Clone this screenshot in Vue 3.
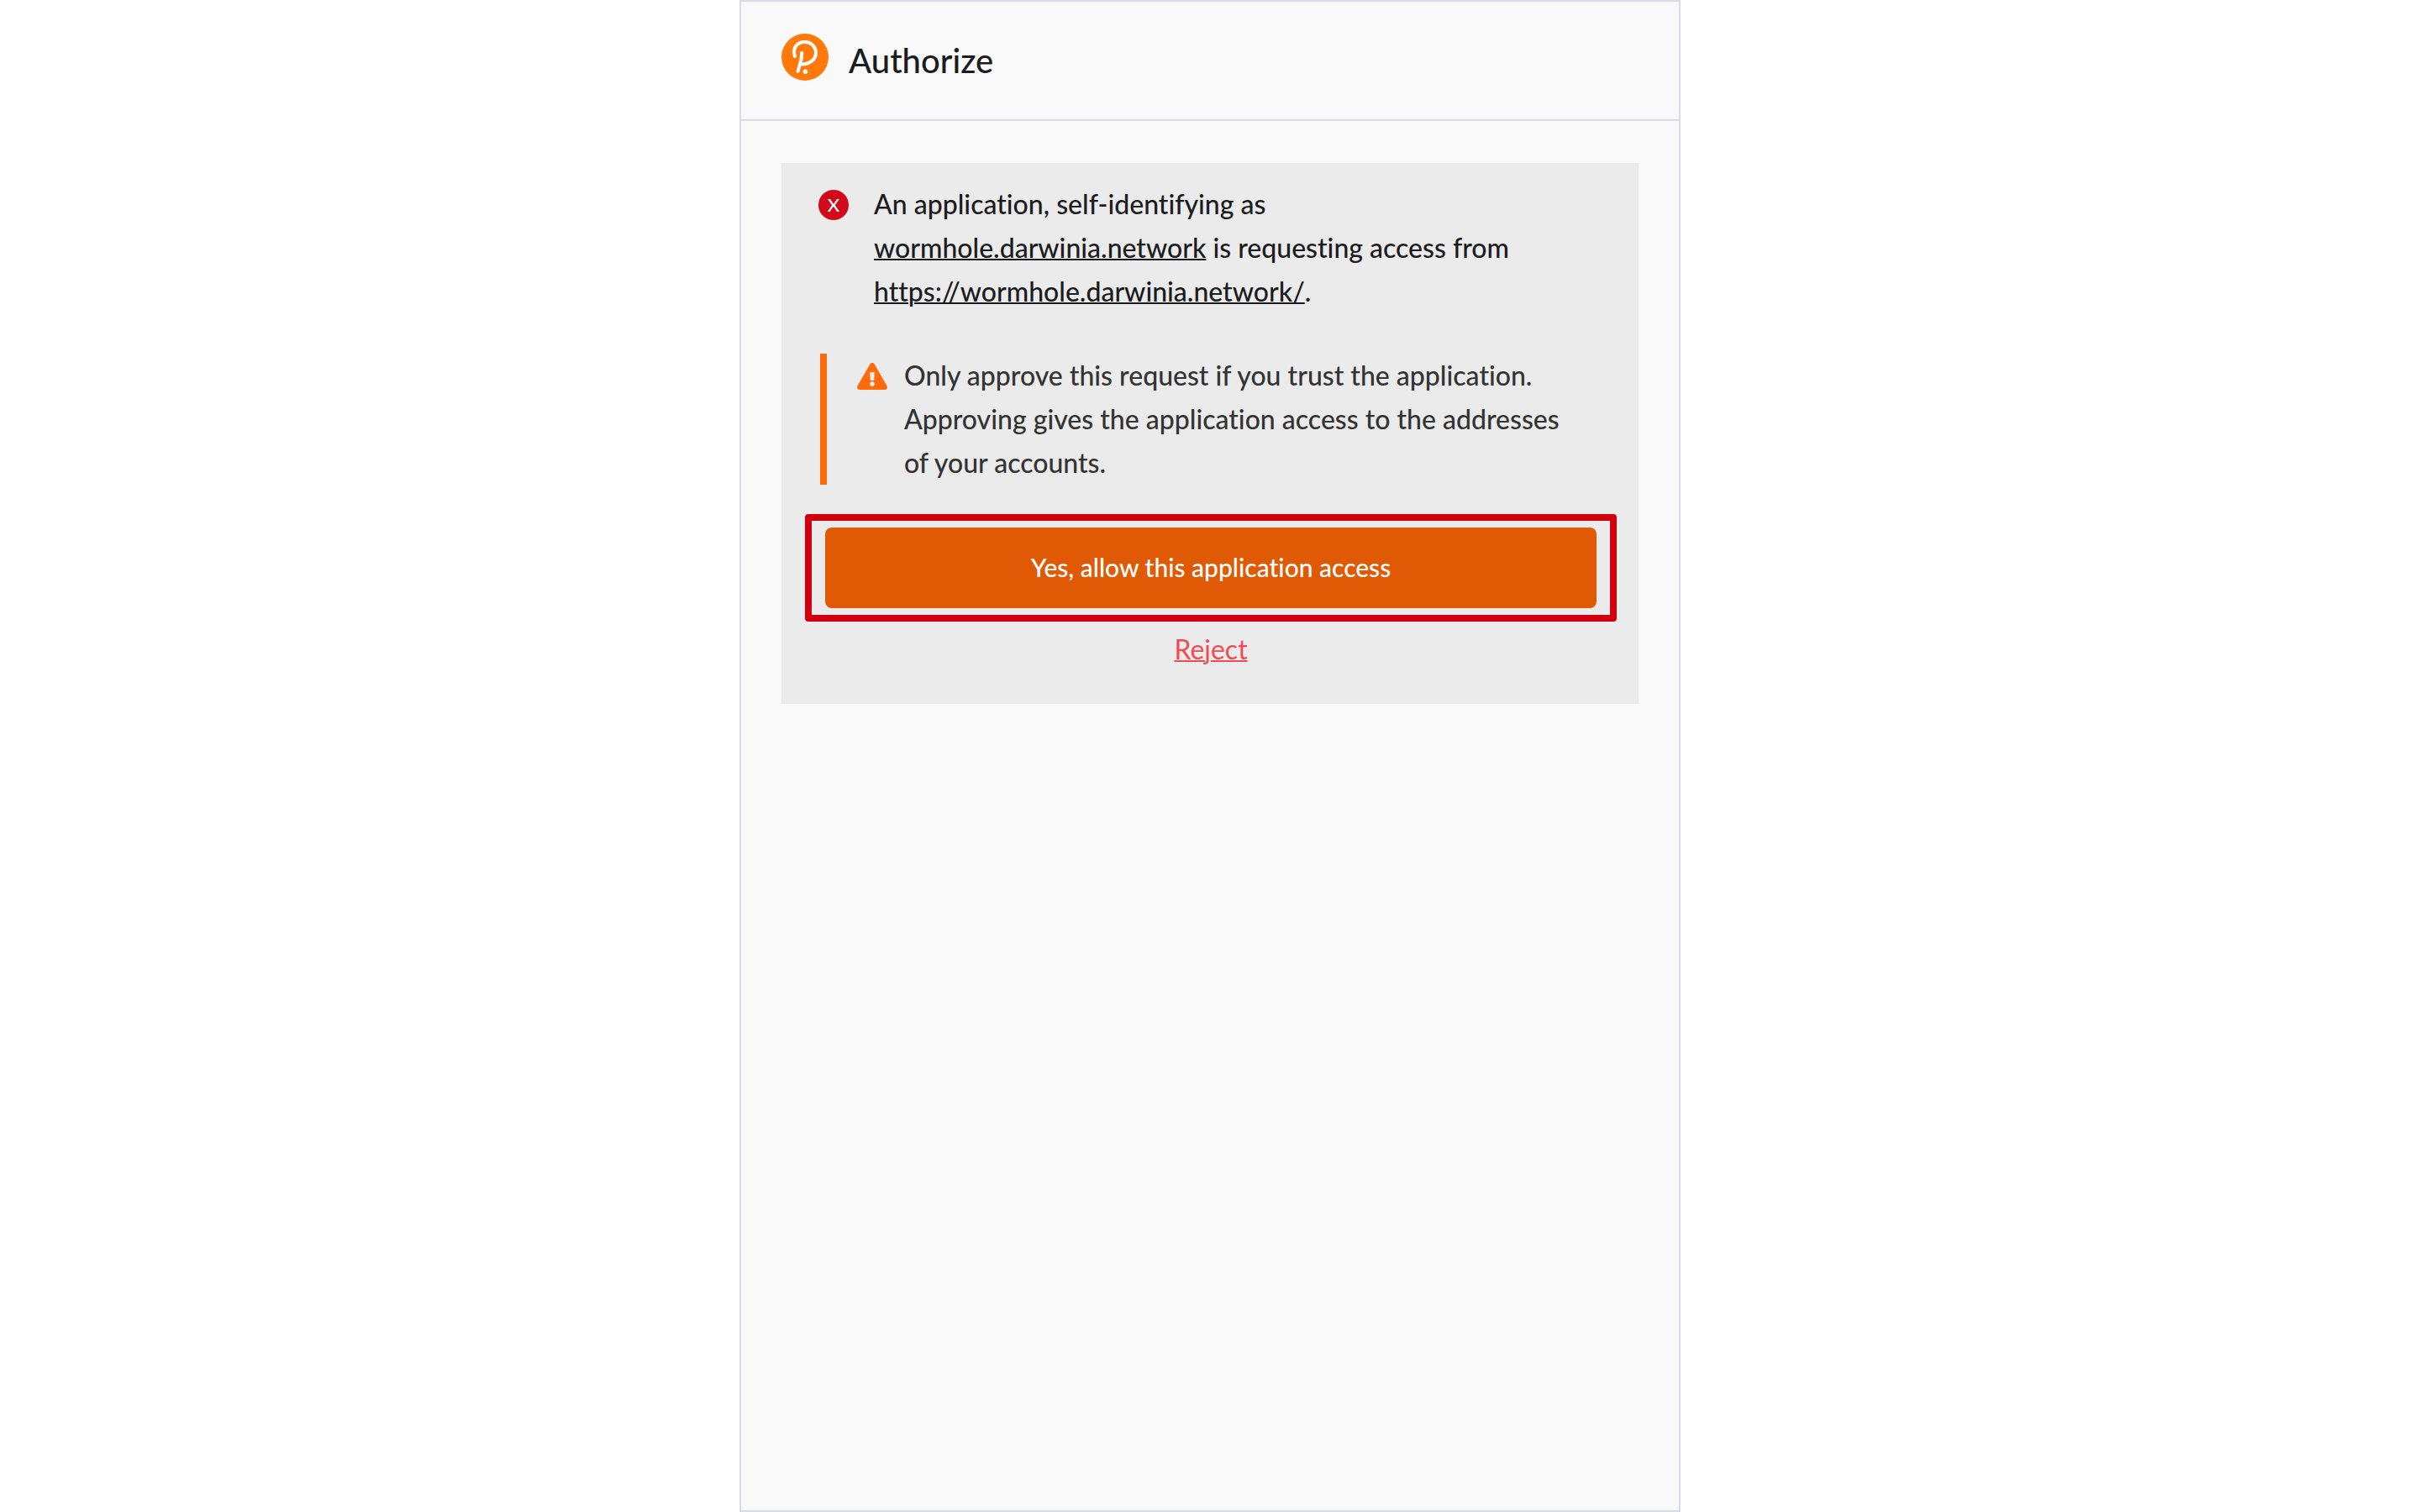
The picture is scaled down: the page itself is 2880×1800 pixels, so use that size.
<script setup>
const appName = 'wormhole.darwinia.network'
const appUrl = 'https://wormhole.darwinia.network/'
</script>

<template>
  <main class="popup">
    <header class="header">
      <svg class="logo" viewBox="0 0 56 56" aria-hidden="true">
        <circle cx="28" cy="28" r="28" fill="#ff7a0a" />
        <g fill="none" stroke="#fff" stroke-width="4" stroke-linecap="round" stroke-linejoin="round">
          <path d="M16 27C12.5 17 19 10 27.500 10C35.500 10 41 16 41 22.500C41 31 34 36.500 23.500 36.500" />
          <path d="M24.300 23L23.500 31L19.500 45" />
        </g>
        <circle cx="28.500" cy="45.300" r="2.700" fill="#fff" />
      </svg>
      <h1 class="title">Authorize</h1>
    </header>

    <section class="request">
      <div class="info">
        <span class="badge">X</span>
        <p class="text">
          An application, self-identifying as
          <a href="#">{{ appName }}</a> is requesting access from
          <a href="#">{{ appUrl }}</a>.
        </p>
      </div>

      <div class="warning">
        <svg class="warning-icon" viewBox="0 0 576 512" aria-hidden="true">
          <path
            fill="#ff6a0a"
            d="M569.517 440.013C587.975 472.007 564.806 512 527.940 512H48.054c-36.937 0-59.999-40.055-41.577-71.987L246.423 23.985c18.467-32.009 64.720-31.951 83.154 0l239.940 416.028zM288 354c-25.405 0-46 20.595-46 46s20.595 46 46 46 46-20.595 46-46-20.595-46-46-46zm-43.673-165.346l7.418 136c.347 6.364 5.609 11.346 11.982 11.346h48.546c6.373 0 11.635-4.982 11.982-11.346l7.418-136c.375-6.874-5.098-12.654-11.982-12.654h-63.383c-6.884 0-12.356 5.780-11.981 12.654z"
          />
        </svg>
        <p class="text">
          Only approve this request if you trust the application. Approving gives the
          application access to the addresses of your accounts.
        </p>
      </div>

      <div class="highlight">
        <button class="allow" type="button">Yes, allow this application access</button>
      </div>
      <a class="reject" href="#">Reject</a>
    </section>
  </main>
</template>

<style>
body {
  margin: 0;
  background: #fff;
}
</style>

<style scoped>
.popup {
  box-sizing: border-box;
  max-width: 1120px;
  min-height: 100vh;
  margin: 0 auto;
  border: 2px solid #d8dbe9;
  background: #f9f9f9;
  color: #1b1c20;
  font-family: Lato, "Open Sans", sans-serif;
  font-size: 32px;
  font-weight: 500;
  font-variant-ligatures: none;
  line-height: 52px;
}

.header {
  display: flex;
  align-items: flex-start;
  gap: 24px;
  padding: 38px 48px 44px;
  border-bottom: 2px solid #d8dbe9;
}

.logo {
  width: 56px;
  height: 56px;
}

.title {
  margin: 6px 0 0;
  font-size: 40px;
  font-weight: 500;
  line-height: 52px;
}

.request {
  display: flex;
  flex-direction: column;
  margin: 50px 48px;
  padding: 23px 26px 39px 28px;
  background: #ebebeb;
}

.info {
  display: flex;
  align-items: flex-start;
  gap: 30px;
  padding: 0 44px 0 16px;
}

.badge {
  flex: none;
  width: 36px;
  height: 36px;
  margin-top: 9px;
  border-radius: 50%;
  background: #d00a1a;
  color: #fff;
  font-size: 22px;
  line-height: 36px;
  text-align: center;
}

.text {
  margin: 0;
}

.text a {
  color: inherit;
  text-decoration-thickness: 2px;
}

.warning {
  display: flex;
  align-items: flex-start;
  gap: 20px;
  margin: 48px 44px 0 18px;
  padding-left: 36px;
  border-left: 8px solid #ff6a0a;
  color: #333;
}

.warning-icon {
  flex: none;
  width: 36px;
  height: 32px;
  margin-top: 11px;
}

.highlight {
  display: flex;
  margin-top: 35px;
  padding: 8px 16px;
  border: 8px solid #d0000f;
  border-radius: 4px;
}

.allow {
  flex: 1;
  height: 96px;
  padding: 0 16px 2px;
  border: 0;
  border-radius: 8px;
  background: #e05a05;
  color: #fff;
  font: inherit;
  font-size: 30px;
  font-variant-ligatures: none;
  cursor: pointer;
}

.reject {
  align-self: center;
  margin-top: 7px;
  color: #f04c56;
  font-weight: 400;
  text-decoration-thickness: 2px;
}
</style>
